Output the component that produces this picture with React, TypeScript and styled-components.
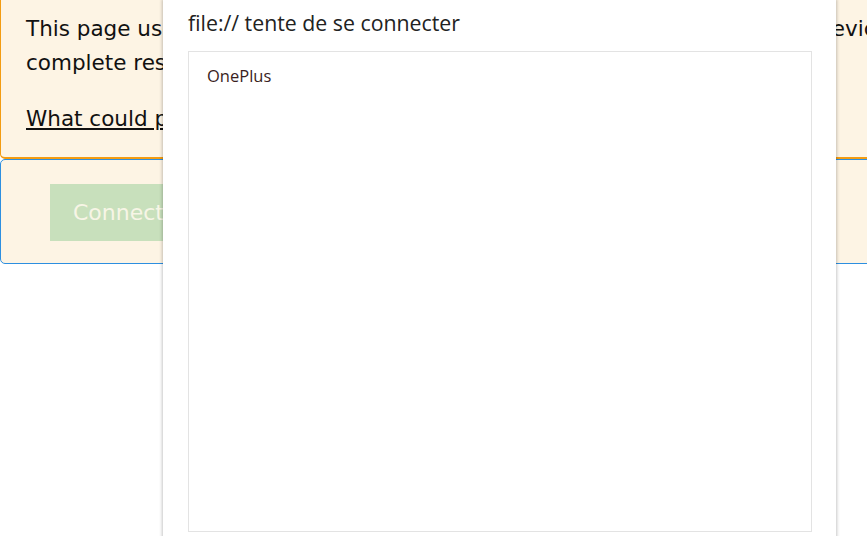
import React from 'react';
import styled, { createGlobalStyle } from 'styled-components';

const GlobalStyle = createGlobalStyle`
  html, body {
    margin: 0;
    padding: 0;
    background: #ffffff;
    overflow: hidden;
  }
  #root {
    width: 867px;
    height: 536px;
  }
`;

const App = () => {
  return (
    <>
      <GlobalStyle />
      <Page>
        <WarningBox>
          <Paragraph>
            This page uses the Web Bluetooth API to communicate to your Bluetooth device
            <br />
            complete reset included. Select your phone in the list below.
          </Paragraph>
          <Paragraph>
            <LinkText href="#">What could possibly go wrong?</LinkText>
          </Paragraph>
        </WarningBox>
        <ActionBox>
          <ConnectButton disabled>Connect</ConnectButton>
        </ActionBox>

        <Chooser>
          <ChooserTitle>file:// tente de se connecter</ChooserTitle>
          <DeviceList>
            <DeviceItem>OnePlus</DeviceItem>
          </DeviceList>
        </Chooser>
      </Page>
    </>
  );
};

const Page = styled.div`
  position: relative;
  width: 867px;
  height: 536px;
  overflow: hidden;
  font-family: 'DejaVu Sans', Verdana, sans-serif;
`;

const WarningBox = styled.div`
  margin-top: -13px;
  width: 1400px;
  padding: 24px 25px 0 25px;
  background: #fdf4e4;
  border: 1px solid #f39c12;
  border-bottom-width: 2px;
  border-radius: 5px;
  box-sizing: border-box;
`;

const Paragraph = styled.p`
  margin: 0 0 22px 0;
  font-size: 21.5px;
  line-height: 34px;
  color: #111;
  white-space: nowrap;

  &:last-child {
    margin-bottom: 21px;
  }
`;

const LinkText = styled.a`
  color: #111;
  text-decoration: underline;
`;

const ActionBox = styled.div`
  width: 1400px;
  height: 105px;
  padding: 24px 49px;
  background: #fdf4e4;
  border: 1px solid #2d8fe0;
  border-radius: 5px;
  box-sizing: border-box;
`;

const ConnectButton = styled.button`
  height: 57px;
  padding: 0 23px;
  border: none;
  background: #c8e0bc;
  color: #f7f5e6;
  font-family: 'DejaVu Sans', Verdana, sans-serif;
  font-size: 22px;
`;

const Chooser = styled.div`
  position: absolute;
  left: 163px;
  top: 0;
  width: 673px;
  height: 560px;
  background: #ffffff;
  box-shadow: 0 0 3px 1px rgba(0, 0, 0, 0.22);
  padding: 8px 24px 0 25px;
  box-sizing: border-box;
  display: flex;
  flex-direction: column;
  font-family: 'Open Sans', 'Noto Sans', sans-serif;
`;

const ChooserTitle = styled.div`
  font-size: 21.3px;
  line-height: 30px;
  color: #222;
  margin-bottom: 13px;
`;

const DeviceList = styled.div`
  height: 481px;
  border: 1px solid #e3e3e3;
  box-sizing: border-box;
  padding: 12px 18px;
`;

const DeviceItem = styled.div`
  font-size: 16.5px;
  line-height: 24px;
  color: #3a1e1e;
`;

export default App;
